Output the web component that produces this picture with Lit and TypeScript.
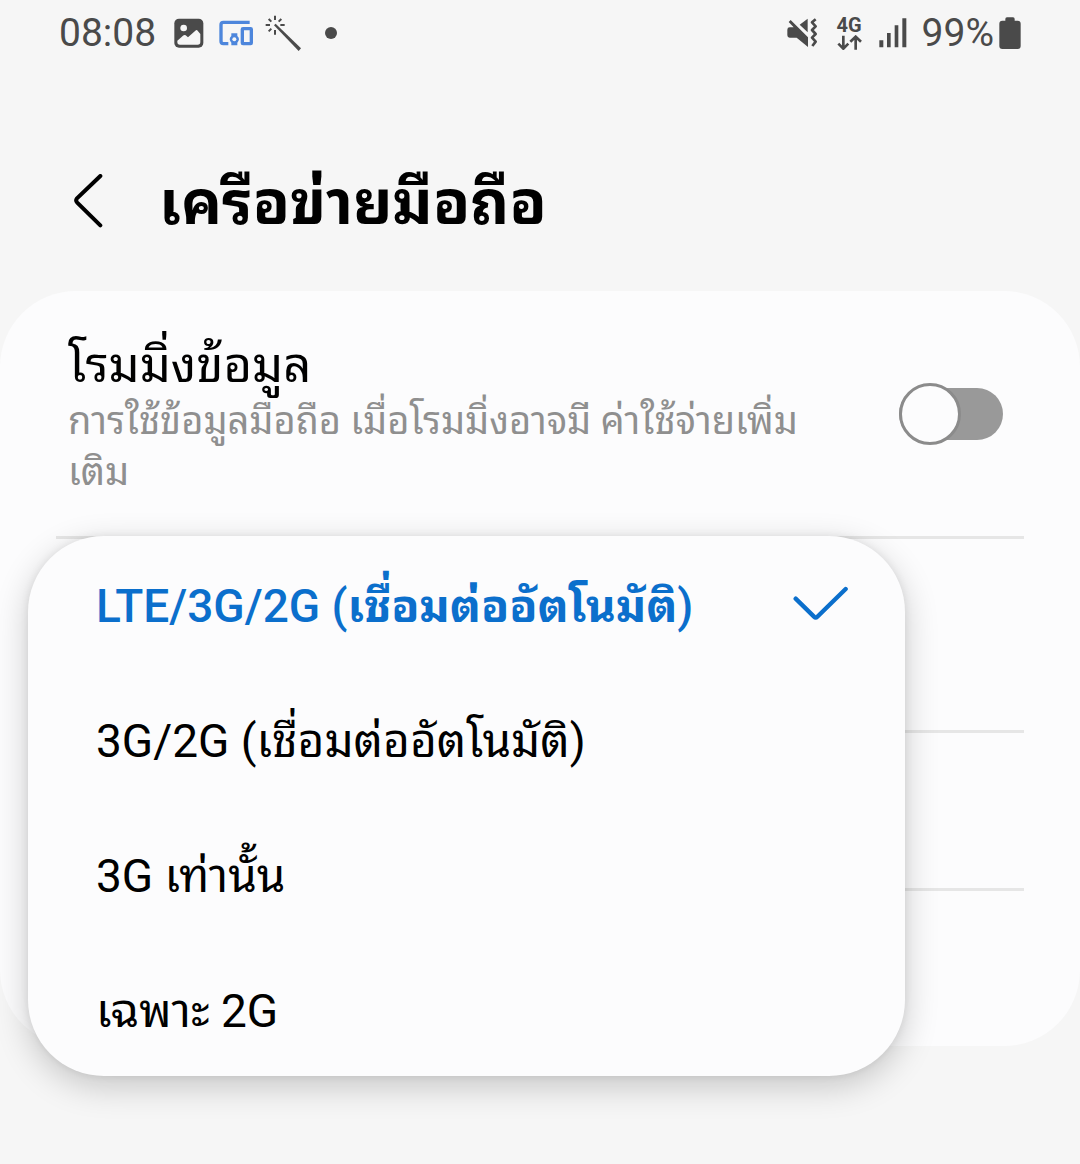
import { LitElement, html, css, nothing } from "lit";
import { customElement, state } from "lit/decorators.js";

const FONT = css`Roboto, "Noto Sans Thai Looped", "Noto Looped Thai", Loma, Garuda, Waree, Umpush, "Noto Sans Thai", "Noto Sans", sans-serif`;

@customElement("status-bar")
class StatusBar extends LitElement {
  static styles = css`
    :host {
      display: flex;
      justify-content: space-between;
      align-items: center;
      height: 66px;
      padding: 0 59px;
      font: 400 39px/48px ${FONT};
      color: #4a4a4a;
    }
    .group {
      display: flex;
      align-items: center;
    }
    .time {
      margin-right: 18px;
    }
    .photo {
      margin-right: 15px;
    }
    .devices {
      margin-right: 12px;
    }
    .wand {
      margin-right: 24px;
    }
    .mute {
      margin-right: 18px;
    }
    .network {
      display: flex;
      flex-direction: column;
      align-items: center;
      gap: 2px;
      margin-right: 17px;
      font: 700 20px/16px ${FONT};
    }
    .signal {
      margin-right: 15px;
    }
    .level {
      margin-right: 5px;
    }
    svg {
      display: block;
      fill: none;
      stroke: currentColor;
    }
    .solid {
      fill: currentColor;
      stroke: none;
    }
    .paper {
      fill: #f6f6f6;
      stroke: none;
    }
    .devices {
      color: #4d86dc;
    }
  `;

  render() {
    return html`
      <div class="group">
        <span class="time">08:08</span>
        <svg class="photo" width="30" height="30" viewBox="0 0 90 90" aria-hidden="true">
          <rect class="solid" x="1" y="2" width="87" height="87" rx="14" />
          <circle class="paper" cx="29" cy="30" r="10" />
          <path class="paper" d="M10 68 27 53q4-4 8-1l7 6 22-20q4-4 7 0l8 10v24q0 8-8 8H18q-8 0-8-8z" />
        </svg>
        <svg class="devices" width="34" height="26" viewBox="505 61 102 78" aria-hidden="true">
          <path d="M597 68H518q-7 0-7 7v50q0 7 7 7h15" stroke-width="10" />
          <rect x="575" y="87" width="27" height="45" stroke-width="10" rx="2" />
          <path class="solid" d="M542 101h18v8q10 9 0 20v8h-18v-8q-10-11 0-20z" />
          <circle class="paper" cx="551" cy="119" r="6" />
        </svg>
        <svg class="wand" width="36" height="36" viewBox="643 45 108 108" aria-hidden="true">
          <path d="M673 47v13M645 75h13M689 75h13M673 90v14M654 57l8 8M692 57l-8 8M654 94l8-8" stroke-width="6" />
          <path class="solid" d="M670 76 675 71 751 145 744 153z" />
        </svg>
        <svg width="12" height="12" viewBox="0 0 12 12" aria-hidden="true">
          <circle class="solid" cx="6" cy="6" r="6" />
        </svg>
      </div>
      <div class="group">
        <svg class="mute" width="31" height="30" viewBox="50 54 93 90" aria-hidden="true">
          <path class="solid" d="M88 74 112 56v41zM58 82H70L55 66 61 60 113 112v29L79 113H58q-7 0-7-7V89q0-7 7-7z" />
          <path d="M136 58 125 67 136 79 125 90 136 102 125 113 136 125 126 138" stroke-width="8" stroke-linejoin="round" />
        </svg>
        <div class="network">
          <span>4G</span>
          <svg width="25" height="15" viewBox="201 103 75 45" aria-hidden="true">
            <path d="M220 105v39M205 129l15 15 15-15M257 147v-39M241 123l16-15 16 15" stroke-width="8" />
          </svg>
        </div>
        <svg class="signal" width="28" height="30" viewBox="326 53 84 90" aria-hidden="true">
          <path class="solid" d="M327 120h12v21h-12zM350 98h11v43h-11zM373 75h11v66h-11zM396 54h12v87h-12z" />
        </svg>
        <span class="level">99%</span>
        <svg width="22" height="32" viewBox="689 51 66 96" aria-hidden="true">
          <path class="solid" d="M708 62v-5q0-5 5-5h18q5 0 5 5v5h9q9 0 9 9v67q0 9-9 9h-46q-9 0-9-9V71q0-9 9-9z" />
        </svg>
      </div>
    `;
  }
}

@customElement("mode-menu")
class ModeMenu extends LitElement {
  @state() private selected = 0;

  private modes = [
    html`LTE/3G/2G (<b>เชื่อมต่ออัตโนมัติ</b>)`,
    html`3G/2G (<b>เชื่อมต่ออัตโนมัติ</b>)`,
    html`3G <b>เท่านั้น</b>`,
    html`<b>เฉพาะ</b> 2G`,
  ];

  static styles = css`
    :host {
      display: block;
      border-radius: 76px;
      background: #fcfcfd;
      box-shadow: 0 10px 34px rgba(0, 0, 0, 0.2), 0 0 8px rgba(0, 0, 0, 0.08);
      overflow: hidden;
    }
    .option {
      display: flex;
      align-items: center;
      justify-content: space-between;
      width: 100%;
      height: 135px;
      margin: 0;
      padding: 0 56px 0 68px;
      border: 0;
      background: none;
      color: #000;
      font: 400 46px/56px ${FONT};
      text-align: left;
    }
    .label {
      padding-top: 4px;
    }
    b {
      font-weight: inherit;
    }
    .selected {
      color: #0b6fcc;
      font-weight: 500;
    }
    .selected b {
      font-weight: 700;
    }
    .check {
      fill: none;
      stroke: currentColor;
    }
  `;

  render() {
    return html`
      <div role="listbox">
        ${this.modes.map(
          (mode, i) => html`
            <button
              class="option ${i === this.selected ? "selected" : ""}"
              role="option"
              aria-selected=${i === this.selected}
              @click=${() => (this.selected = i)}
            >
              <span class="label">${mode}</span>
              ${i === this.selected
                ? html`<svg class="check" width="56" height="36" viewBox="340 197 168 108" aria-hidden="true">
                    <path d="M348 235 403 289q5 5 10 0L498 206" stroke-width="13" stroke-linecap="round" />
                  </svg>`
                : nothing}
            </button>
          `
        )}
      </div>
    `;
  }
}

@customElement("app-root")
class AppRoot extends LitElement {
  static styles = css`
    :host {
      display: block;
      min-height: 100vh;
      background: #f6f6f6;
      color: #000;
      font-family: ${FONT};
    }
    .header {
      display: flex;
      align-items: center;
      gap: 53px;
      height: 225px;
      padding: 45px 74px 0;
      box-sizing: border-box;
    }
    .back {
      display: block;
      padding: 0;
      border: 0;
      background: none;
      color: inherit;
    }
    .back svg {
      display: block;
      fill: none;
      stroke: currentColor;
    }
    .title {
      margin: 0;
      padding-top: 4px;
      font-size: 61px;
      line-height: 80px;
      font-weight: 700;
    }
    .card {
      border-radius: 76px;
      background: #fcfcfd;
    }
    .roaming {
      display: flex;
      align-items: center;
      justify-content: space-between;
      min-height: 245px;
      padding: 0 77px 0 68px;
      box-sizing: border-box;
    }
    .text {
      display: block;
      max-width: 760px;
      padding-top: 6px;
    }
    .name {
      display: block;
      font-size: 49px;
      line-height: 60px;
    }
    .note {
      display: block;
      color: #8f8f8f;
      font-size: 38px;
      line-height: 51px;
    }
    .switch {
      appearance: none;
      display: flex;
      align-items: center;
      flex: none;
      width: 104px;
      height: 62px;
      margin: 0;
      position: relative;
    }
    .switch::before {
      content: "";
      flex: 1;
      height: 52px;
      border-radius: 26px;
      background: #999;
    }
    .switch::after {
      content: "";
      position: absolute;
      left: 0;
      box-sizing: border-box;
      width: 62px;
      height: 62px;
      border: 3px solid #8b8b8b;
      border-radius: 50%;
      background: #fcfcfd;
    }
    .switch:checked::after {
      left: auto;
      right: 0;
    }
    .row::before {
      content: "";
      display: block;
      height: 3px;
      margin: 0 56px;
      background: #e6e6e6;
    }
    .row {
      min-height: 158px;
    }
    .tall {
      position: relative;
      min-height: 194px;
    }
    .menu {
      position: absolute;
      top: 0;
      left: 28px;
      right: 175px;
      z-index: 1;
    }
  `;

  render() {
    return html`
      <status-bar></status-bar>
      <header class="header">
        <button class="back" aria-label="กลับ">
          <svg width="32" height="54" viewBox="73 74 96 162" aria-hidden="true">
            <path d="M152 80 82 147q-5 6 0 12L152 228" stroke-width="12" stroke-linecap="round" />
          </svg>
        </button>
        <h1 class="title">เครือข่ายมือถือ</h1>
      </header>
      <main class="card">
        <div class="roaming">
          <label class="text" for="roaming">
            <span class="name">โรมมิ่งข้อมูล</span>
            <span class="note">การใช้ข้อมูลมือถือ เมื่อโรมมิ่งอาจมี ค่าใช้จ่ายเพิ่มเติม</span>
          </label>
          <input class="switch" id="roaming" type="checkbox" role="switch" />
        </div>
        <div class="row tall">
          <mode-menu class="menu"></mode-menu>
        </div>
        <div class="row"></div>
        <div class="row"></div>
      </main>
    `;
  }
}
